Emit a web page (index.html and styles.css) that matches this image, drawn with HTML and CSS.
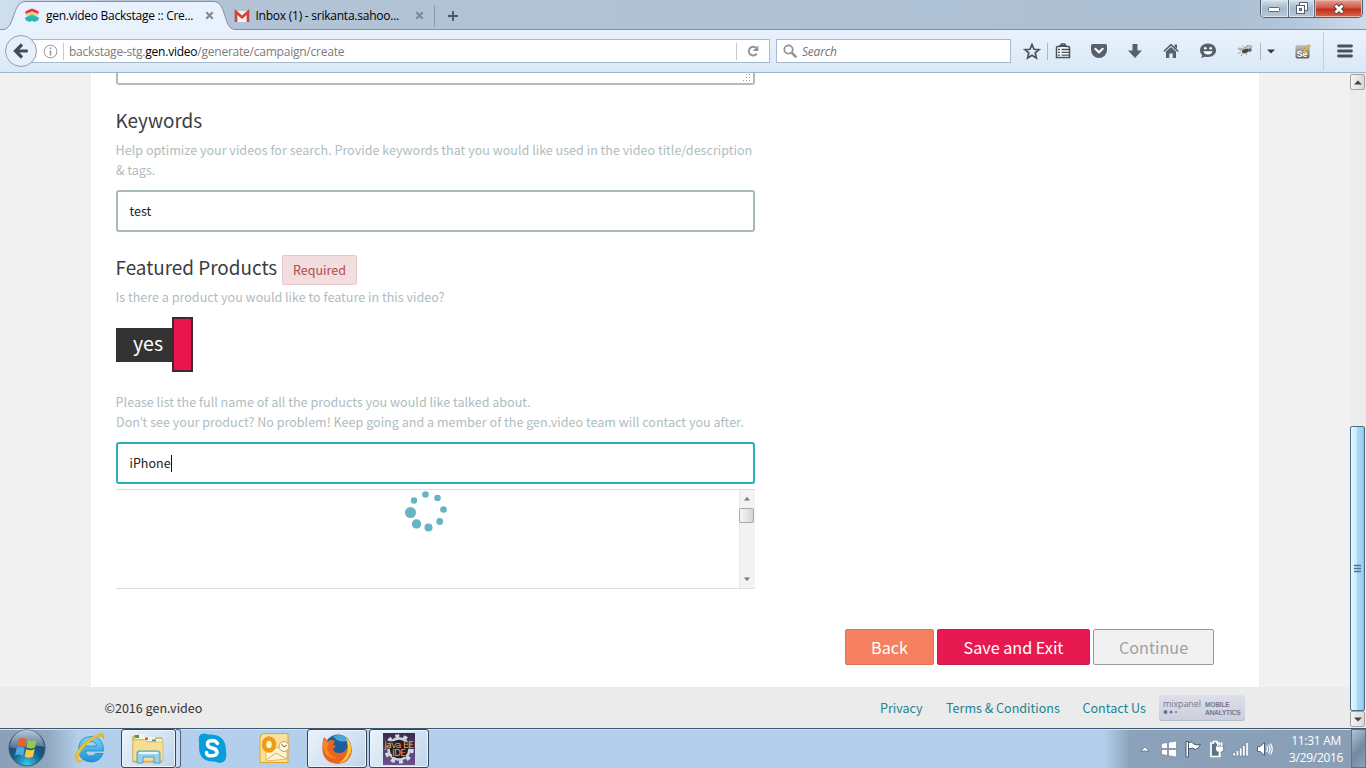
FILE: index.html
```html
<!DOCTYPE html>
<html lang="en">
<head>
<meta charset="utf-8">
<title>gen.video Backstage :: Create</title>
<link rel="stylesheet" href="styles.css">
</head>
<body>
<header class="tabs">
  <svg class="tab-shape" width="250" height="31" viewBox="0 0 250 31"><path d="M0 31V29.5H3C15 29 12 2.500 25 1.500H214C227 2.500 223 29 235 29.500H250V31Z" fill="#e9f2fc"/><path d="M0 29.500H3C15 29 12 2.500 25 1.500H214C227 2.500 223 29 235 29.500H250" fill="none" stroke="#7e91a6"/></svg>
  <div class="tab tab-active">
    <svg width="16" height="16" viewBox="0 0 16 16"><path d="M1 4 4 2 8 .5 12 2 15 4 14 6 8 3.500 2 6Z" fill="#e3354b"/><path d="M2 6 8 3.500 14 6 14 8 8 6 2 8Z" fill="#f6cf72"/><path d="M1 9.500 8 6 15 9.500 13 11 8 8.500 3 11Z" fill="#5bbd8a"/><path d="M1 10 8 8 15 10 14 12.500 10 14 8 12.500 6 14 2 12.500Z" fill="#20b6bd"/></svg>
    <span class="tab-title t1">gen.video Backstage :: Cre...</span>
    <svg class="close" width="9" height="9" viewBox="0 0 9 9"><path d="M1.300 1.300 7.700 7.700M7.700 1.300 1.300 7.700"/></svg>
  </div>
  <div class="tab tab-second">
    <svg width="16" height="16" viewBox="0 0 16 16"><path d="M1 3H15V14H1Z" fill="#eee"/><path d="M3 14V5.500L8 10 13 5.500V14" fill="#f5f3f3" stroke="#cfc8c8" stroke-width=".6"/><path d="M2 14V4L8 9.300 14 4V14" fill="none" stroke="#cf4338" stroke-width="2.600"/></svg>
    <span class="tab-title t2">Inbox (1) - srikanta.sahoo...</span>
    <svg class="close" width="9" height="9" viewBox="0 0 9 9"><path d="M1.300 1.300 7.700 7.700M7.700 1.300 1.300 7.700"/></svg>
  </div>
  <i class="tab-sep"></i>
  <svg class="plus" width="12" height="12" viewBox="0 0 12 12"><path d="M6 1V11M1 6H11" stroke="#4b5966" stroke-width="1.800"/></svg>
  <div class="window-buttons">
    <span class="min"><svg width="14" height="6"><rect x="1.500" y=".5" width="11" height="4" rx="1" fill="#fff" stroke="#5c6c7d"/></svg></span>
    <span class="max"><svg width="13" height="13"><path d="M4.500.5H12.500V8.500H4.500Z" fill="#fff" stroke="#55616e"/><rect x="1.500" y="3.500" width="8" height="8" fill="#fff" stroke="#55616e"/><rect x="4.500" y="6.500" width="2" height="2" fill="#9cb0c4" stroke="#55616e"/></svg></span>
    <span class="x"><svg width="14" height="12"><path d="M3 2 11 10M11 2 3 10" stroke="#5d3b3b" stroke-width="4.600"/><path d="M3.500 2.500 10.500 9.500M10.500 2.500 3.500 9.500" stroke="#fff" stroke-width="2.800"/></svg></span>
  </div>
</header>

<nav class="toolbar">
  <svg class="back" width="34" height="34" viewBox="0 0 34 34"><circle cx="17" cy="17" r="15.500" fill="#e7f0fa" stroke="#8d9fb4"/><path d="M23.800 17H12M18 10.500 11.500 17 18 23.500" fill="none" stroke="#414c58" stroke-width="3.200"/></svg>
  <div class="urlbar">
    <svg width="15" height="15" viewBox="0 0 15 15"><circle cx="7.500" cy="7.500" r="6.400" fill="#fff" stroke="#999"/><path d="M7.500 6.500V11.500M7.500 3.500V5.200" stroke="#999" stroke-width="1.600"/></svg>
    <i class="bar-sep"></i>
    <span class="url">backstage-stg.<b>gen.video</b>/generate/campaign/create</span>
    <i class="bar-sep"></i>
    <svg class="reload" width="14" height="14" viewBox="0 0 14 14"><path d="M10.800 9.700A4.400 4.400 0 1 1 10.300 4" fill="none" stroke="#8c969f" stroke-width="2"/><path d="M12.300 1.300V7H6.800Z" fill="#8c969f"/></svg>
  </div>
  <div class="search">
    <svg width="15" height="15" viewBox="0 0 15 15"><circle cx="5.500" cy="5.500" r="4.200" fill="none" stroke="#929292" stroke-width="1.800"/><path d="M8.700 8.700 13.300 13.300" stroke="#929292" stroke-width="2.600"/></svg>
    <span>Search</span>
  </div>
  <div class="tools">
    <svg class="tool" viewBox="0 0 24 24"><path d="M12 5.500 14 10.300 19 10.600 15.200 13.900 16.400 19 12 16.300 7.600 19 8.800 13.900 5 10.600 10 10.300Z" fill="none" stroke="#46515d" stroke-width="1.700"/></svg>
    <i class="tool-sep s1"></i>
    <svg class="tool" viewBox="0 0 24 24"><path d="M5.500 8.500Q5.500 7.500 6.500 7.500H9L10.500 5H13.500L15 7.500H17.500Q18.500 7.500 18.500 8.500V18.500H5.500Z" fill="#fff" stroke="#46515d" stroke-width="1.500"/><path d="M8.500 7H15.500" stroke="#46515d" stroke-width="2"/><path d="M7 10.500H9M10.500 10.500H18M7 13.300H9M10.500 13.300H18M7 16.100H9M10.500 16.100H18" stroke="#46515d" stroke-width="1.300"/></svg>
    <svg class="tool g" viewBox="0 0 24 24"><path d="M4 6.500Q4 5 5.500 5H18.500Q20 5 20 6.500V11A8 8 0 0 1 4 11Z" fill="#56616e"/><path d="M8.300 9.800 12 13.300 15.700 9.800" fill="none" stroke="#fff" stroke-width="2" stroke-linecap="round"/></svg>
    <svg class="tool g" viewBox="0 0 24 24"><path d="M9.500 5H14.500V11.500H19L12 19 5 11.500H9.500Z" fill="#56616e"/></svg>
    <svg class="tool g" viewBox="0 0 24 24"><path d="M4.800 12.500 12 5.700 19.200 12.500" fill="none" stroke="#56616e" stroke-width="1.700"/><path d="M15.500 5.500H18V10L15.500 7.500ZM7 12.500 12 8 17 12.500V19H13.700V14.500H10.300V19H7Z" fill="#56616e"/></svg>
    <svg class="tool g chat" viewBox="0 0 24 24"><path d="M12 4.500C17 4.500 20 7.500 20 11.300S17 18 12 18Q10.500 18 9.300 17.700L4.800 19Q6.500 17.500 6 16A6 6 0 0 1 4 11.300C4 7.500 7 4.500 12 4.500Z" fill="#56616e"/><circle cx="9.300" cy="9.200" r="1.300" fill="#fff"/><circle cx="14.700" cy="9.200" r="1.300" fill="#fff"/><path d="M7.500 12.300H16.500Q15.500 15.500 12 15.500T7.500 12.300Z" fill="#fff"/></svg>
    <svg class="tool g chat" viewBox="0 0 24 24"><path d="M8 13 5 14.500M10 14 8 17M13 13 13.500 16M16 11 18 13M12 9 9.500 7M14 8 14.500 6" stroke="#888" stroke-width=".8" fill="none"/><ellipse cx="9" cy="10.500" rx="4.500" ry="1.600" fill="#b4b4b4" transform="rotate(15 9 10.500)"/><ellipse cx="15.500" cy="8.500" rx="3.500" ry="1.700" fill="#c8c8c8" stroke="#888" stroke-width=".6" transform="rotate(-15 15.500 8.500)"/><ellipse cx="12.500" cy="12" rx="3.600" ry="2" fill="#484848" transform="rotate(-15 12.500 12)"/><circle cx="17" cy="11" r="1.800" fill="#666"/></svg>
    <i class="tool-sep s2"></i>
    <svg class="caret" viewBox="0 0 20 24" width="20" height="24"><path d="M6 10.500H14L10 14.500Z" fill="#303a44"/></svg>
    <svg class="tool sc" viewBox="0 0 24 24"><defs><linearGradient id="se" x2="0" y2="1"><stop stop-color="#c5c5c2"/><stop offset="1" stop-color="#5c5c5a"/></linearGradient></defs><rect x="4.500" y="6" width="14" height="13.500" rx="2" fill="url(#se)"/><text x="5.500" y="17.700" class="se-text">Se</text><path d="M12 12.500 17.500 5.500 19.500 7 13.800 13.500 11.500 14Z" fill="#e4bd4a" stroke="#9e8540" stroke-width=".5"/></svg>
    <i class="tool-sep s3"></i>
    <svg class="tool menu" viewBox="0 0 24 24"><path d="M5.500 7H18.500M5.500 12H18.500M5.500 17H18.500" stroke="#46515d" stroke-width="2.800" stroke-linecap="round"/></svg>
  </div>
</nav>

<div class="viewport">
  <div class="page">
    <main class="panel">
      <div class="form">
        <div class="textarea-end"><svg width="9" height="9" viewBox="0 0 9 9"><path d="M7 0h1v1h-1zM4 3h1v1h-1zM7 3h1v1h-1zM1 6h1v1h-1zM4 6h1v1h-1zM7 6h1v1h-1z" fill="#999"/></svg></div>
        <h2 class="keywords">Keywords</h2>
        <p class="help">Help optimize your videos for search. Provide keywords that you would like used in the video title/description<br>&amp; tags.</p>
        <div class="input">test</div>
        <div class="feature-row"><h2>Featured Products</h2><span class="required">Required</span></div>
        <p class="help">Is there a product you would like to feature in this video?</p>
        <div class="toggle"><span class="yes">yes</span><span class="handle"></span></div>
        <p class="help">Please list the full name of all the products you would like talked about.<br>Don<span class="apos">’</span>t see your product? No problem! Keep going and a member of the gen.video team will contact you after.</p>
        <div class="input focus">iPhone<i class="cursor"></i></div>
        <div class="results">
          <svg class="spinner" width="44" height="44" viewBox="0 0 44 44" fill="#67b4c3"><circle cx="21.500" cy="5.500" r="3.300"/><circle cx="33.500" cy="9" r="3.300"/><circle cx="39.500" cy="20.500" r="3.300"/><circle cx="35.700" cy="32.500" r="3.400"/><circle cx="24.500" cy="38.500" r="4"/><circle cx="12.500" cy="35" r="4.700"/><circle cx="6.500" cy="23.500" r="5.500"/><circle cx="10" cy="11.500" r="3.200"/></svg>
          <div class="mini-scroll"><svg width="8" height="5"><path d="M1 4.500H7L4 1Z" fill="#777"/></svg><i class="mini-thumb"></i><svg width="8" height="5"><path d="M1 .5H7L4 4Z" fill="#777"/></svg></div>
        </div>
      </div>
      <div class="actions"><span class="btn btn-back">Back</span><span class="btn btn-save">Save and Exit</span><span class="btn btn-cont">Continue</span></div>
    </main>
    <footer class="footer">
      <span class="copy">©2016 gen.video</span>
      <div class="links"><a class="l1">Privacy</a><a class="l2">Terms &amp; Conditions</a><a class="l3">Contact Us</a></div>
      <div class="mixpanel"><div class="mp-logo"><span>mixpanel</span><svg width="16" height="6"><g fill="#6f6f8c"><circle cx="2.500" cy="3" r="2"/><circle cx="8" cy="3" r="1.500"/><circle cx="13" cy="3" r="1"/></g></svg></div><div class="mp-text">MOBILE<br>ANALYTICS</div></div>
    </footer>
  </div>
  <div class="scrollbar">
    <span class="sb-btn"><svg width="8" height="5"><path d="M0 4.500H8L4 .5Z" fill="#444"/></svg></span>
    <span class="thumb"><svg width="8" height="9"><path d="M0 1.500H7M0 4.500H7M0 7.500H7" stroke="#3d7898" stroke-width="1.500"/></svg></span>
    <span class="sb-btn"><svg width="8" height="5"><path d="M0 .5H8L4 4.500Z" fill="#444"/></svg></span>
  </div>
</div>

<div class="taskbar">
  <svg class="start" width="38" height="38" viewBox="0 0 38 38"><defs><radialGradient id="orb" cx=".5" cy=".95" r=".8"><stop stop-color="#39c8ee"/><stop offset=".5" stop-color="#15618f"/><stop offset="1" stop-color="#1c405f"/></radialGradient><linearGradient id="orbtop" x2="0" y2="1"><stop stop-color="#b8c9d8"/><stop offset="1" stop-color="#54718f"/></linearGradient></defs><circle cx="19" cy="19" r="18" fill="url(#orb)" stroke="#3f5a77"/><path d="M2 18A17 17 0 0 1 36 18Q28 15 19 18T2 18Z" fill="url(#orbtop)"/><path d="M11 10Q15 8 18.500 10.500L17 18Q13 15.500 9 17.500Z" fill="#e8622c"/><path d="M20 11Q24 13 28.500 11L27 18.500Q23 20.500 18.700 18.500Z" fill="#9ac644"/><path d="M8.700 19Q13 17 16.800 19.500L15 27Q11 24.500 7 26.500Z" fill="#4fa9e3"/><path d="M18.300 20Q22 22.500 26.700 20L25 27.500Q21 30 16.600 27.500Z" fill="#fbc93d"/></svg>
  <svg class="ie" width="34" height="34" viewBox="0 0 34 34"><defs><linearGradient id="ieg" x2="0" y2="1"><stop stop-color="#77d7f8"/><stop offset="1" stop-color="#1b8fd4"/></linearGradient></defs><path d="M30.500 20H12.500Q13 25 18 25 21.500 25 22.500 22.500H30Q27 31 18 31 5.500 30 5.500 18 6 6 18 5.500 31 6 30.500 20ZM12.500 15H23.500Q23 10.500 18 10.500T12.500 15Z" fill="url(#ieg)" stroke="#2488c2" stroke-width=".8"/><path d="M25 5.500Q31 1.500 30.500 6.500 29.500 2.500 21 7.500 9 15 5 26 3.500 31.500 10 29 3 34.500 2 27 3 19 13 10.500 19 5.500 26 3Q33 1 30.500 8 31 4 25 5.500Z" fill="#f5c42e" stroke="#e0aa20" stroke-width=".7"/></svg>
  <div class="task explorer"><svg width="34" height="32" viewBox="0 0 34 32"><path d="M2 3H13L15 5H31V29H2Z" fill="#e9cb70" stroke="#c2a048"/><path d="M4 1.500H14V6H4ZM13 4H24V8H13ZM21 6H31V10H21Z" fill="#f6f4df"/><path d="M4 2H8V5H4Z" fill="#35a149"/><path d="M14 4.500H17V7H14Z" fill="#dd5743"/><path d="M21 6.500H25V8.500H21Z" fill="#3e91cf"/><path d="M2 7H14L16 9H32V28H2Z" fill="#f6df94" stroke="#d5b861" stroke-width=".8"/><path d="M6 30V20Q6 18 8 18H27Q29 18 29 20V30H23V24H12V30Z" fill="#9bd0e9" stroke="#4b9fc8"/><path d="M8 20H27" stroke="#e7f8ff" stroke-width="2"/></svg></div>
  <i class="stack"></i>
  <svg class="skype" width="32" height="32" viewBox="0 0 32 32"><path d="M3 10Q1 2 8 1.500L13 2.500Q30 2 30 19 32 30 24 31L18 29.500Q3 30 3 15Z" fill="#079edb"/><path d="M21.500 11.500Q20 8.500 16 8.500 11.500 8.700 11.500 12T16 16 21 20 16 23.800 10.500 20.500" fill="none" stroke="#fff" stroke-width="3.500" stroke-linecap="round"/></svg>
  <svg class="outlook" width="32" height="32" viewBox="0 0 32 32"><path d="M5 1.500H30V30.500H2V5Z" fill="#fbe09a" stroke="#e1a52d"/><path d="M8 18 29 14V27L8 29Z" fill="#fff6d7" stroke="#d8a848" stroke-width=".7"/><path d="M8 28 18 21 29 27" fill="none" stroke="#e2b248"/><ellipse cx="11" cy="12.500" rx="5" ry="6" fill="#fff2c9" stroke="#ed9c19" stroke-width="4.500"/><circle cx="26" cy="14.500" r="5" fill="#fff9e6" stroke="#d8a139"/><path d="M23.500 12 26 15 29 13" fill="none" stroke="#7d6337"/></svg>
  <div class="task firefox"><svg width="32" height="32" viewBox="0 0 32 32"><circle cx="17" cy="14.500" r="13" fill="#1d5f9e"/><path d="M12 3Q22 0 28 7 22 10 16 7Z" fill="#45a9d8"/><path d="M3 4 7 8Q11 6 14 8L12 12 15 13 12 16Q13 20 18 20 24 20 26 15 28 10 25 5 31 9 31 18 29 30 17 31 3 30 1.500 18 1 9 3 4Z" fill="#e9641f"/><path d="M25 4Q34 14 28 23 25 29 18 30 27 24 27 14Z" fill="#f9c83e"/><path d="M3 5Q4 9 8 10L6 16Q8 23 16 25 8 26 4 20 1 13 3 5Z" fill="#f58b25"/></svg></div>
  <div class="task java"><svg width="32" height="32" viewBox="0 0 32 32"><defs><linearGradient id="jg" x2="0" y2="1"><stop stop-color="#382b4c"/><stop offset="1" stop-color="#6b5190"/></linearGradient></defs><rect width="32" height="32" fill="url(#jg)"/><circle cx="16" cy="16" r="13" fill="none" stroke="#d8d9dd" stroke-width="3.500" stroke-dasharray="4 4.170"/><circle cx="16" cy="16" r="10.500" fill="#211f27" stroke="#cfd0d6" stroke-width="2.600"/><path d="M1 8H31V16H23V24H9V16H1Z" fill="#211f27" opacity=".75"/></svg><div class="java-text"><span>Java EE</span><span>IDE</span></div></div>
  <div class="tray">
    <svg class="up" width="10" height="6"><path d="M.8 5H9.200L5 1Z" fill="#fff" stroke="#586b80" stroke-width=".7"/></svg>
    <svg width="18" height="18" viewBox="0 0 18 18"><path d="M1.500 3.500 7.500 2.500V8.500H1.500ZM8.500 2.300 16.500 1V8.500H8.500ZM1.500 9.500H7.500V15.500L1.500 14.500ZM8.500 9.500H16.500V17L8.500 15.700Z" fill="#fff" stroke="#586b80" stroke-width=".5"/></svg>
    <svg width="18" height="18" viewBox="0 0 18 18"><path d="M2 1.500H4.500V17H2ZM4.500 2.500Q8 1 10 4 13 6 16.500 4 15 9 11.500 9.500 9 7 4.500 9Z" fill="#fff" stroke="#43576c"/></svg>
    <svg width="18" height="18" viewBox="0 0 18 18"><path d="M3 3H5.500V1.500H9V3H11.500V16.500H3Z" fill="#5e7287" stroke="#fff" stroke-width="1.700"/><path d="M7.500 6H15.700V9.500Q15.500 12.500 11.700 12.500 8 12.500 7.500 9.500Z" fill="#fff" stroke="#4f6378" stroke-width=".8"/><path d="M9.800 2.500V6M13.700 2.500V6M11.700 12V17" stroke="#fff" stroke-width="1.500"/></svg>
    <svg width="18" height="18" viewBox="0 0 18 18"><path d="M1 12.500V16H3.500V12.500ZM4.200 10.500V16H6.700V10.500ZM7.400 8V16H9.900V8ZM10.600 5.500V16H13.100V5.500ZM13.800 2.500V16H16.300V2.500Z" fill="#fff" stroke="#596d82" stroke-width=".5"/></svg>
    <svg width="18" height="18" viewBox="0 0 18 18"><path d="M1.500 6.500H4L8.500 2.500V15.500L4 11.500H1.500Z" fill="#fff" stroke="#4f6378"/><path d="M10.500 6Q12.500 9 10.500 12M12.500 4.500Q15.500 9 12.500 13.500M14.500 3.500Q18 9 14.500 14.500" fill="none" stroke="#fff" stroke-width="1.200"/></svg>
  </div>
  <div class="clock"><span>11:31 AM</span><span class="date">3/29/2016</span></div>
  <i class="show-desktop"></i>
</div>
</body>
</html>
```
FILE: styles.css
```css
* { box-sizing: border-box; }
html, body { margin: 0; overflow: hidden; }
body { width: 1366px; height: 768px; display: flex; flex-direction: column; font-family: "Noto Sans CJK SC", sans-serif; background: #f1f1f1; }
svg { display: block; flex: none; }
i { flex: none; }

.tabs { position: relative; height: 30px; flex: none; display: flex; background: linear-gradient(90deg, #cfdfee 0, #b3c4d6 130px, #adbfd2 1230px, #b5c8db 1300px, #cbdcec 1366px); border-bottom: 1px solid #7e91a6; font: 12px "Open Sans", sans-serif; color: #000; }
.tab-shape { position: absolute; left: 0; top: 0; }
.tab { position: relative; display: flex; align-items: center; height: 31px; }
.tab-active { padding-left: 24px; width: 227px; }
.tab-second { padding-left: 7px; width: 207px; }
.tab-title { margin-left: 6px; white-space: nowrap; width: 159px; line-height: 18px; }
.t1 { letter-spacing: -.26px; }
.t2 { letter-spacing: -.24px; margin-left: 5.500px; }
.close { stroke: #7c8b98; stroke-width: 2.2; }
.tab-sep { width: 1px; height: 22px; margin: 5px 12px 0 0; background: #8798a9; }
.plus { margin-top: 10px; }
.window-buttons { display: flex; flex: none; margin-left: 801px; width: 103px; height: 18px; border: 1px solid #505e6d; border-top: 0; border-radius: 0 0 5px 5px; overflow: hidden; }
.window-buttons span { display: flex; align-items: center; justify-content: center; background: linear-gradient(#d4e0ec, #a6b8cb 50%, #b7c9da); box-shadow: inset 0 0 0 1px #dce6f0; border-right: 1px solid #5c6b7a; }
.window-buttons .min { width: 28px; padding-top: 3px; }
.window-buttons .max { width: 27px; }
.window-buttons .x { width: 47px; border: 0; background: linear-gradient(#e3a195, #cf5a48 45%, #c02f1c 55%, #da6a4d); box-shadow: inset 0 0 0 1px #eab7a9; }

.toolbar { height: 43px; flex: none; display: flex; background: linear-gradient(#e9f2fc, #dae8f6); border-bottom: 1px solid #a4b5c9; position: relative; }
.back { margin: 4px 0 0 4px; position: relative; z-index: 1; }
.urlbar { margin: 9px 0 0 -8px; width: 740px; height: 24px; border: 1px solid #a9bace; background: #fff; display: flex; align-items: center; padding-left: 12px; }
.bar-sep { width: 1px; height: 17px; background: #c9c9c9; }
.urlbar .bar-sep { margin-left: 5px; }
.url { margin-left: 5px; padding-top: 2px; width: 662px; font: 12px/18px "Open Sans", sans-serif; letter-spacing: -.23px; color: #7b7b7b; white-space: nowrap; }
.url b { font-weight: 400; color: #000; }
.reload { margin-left: 9px; }
.search { margin: 9px 0 0 6px; width: 235px; height: 24px; background: #fff; border: 1px solid #a9bace; display: flex; align-items: center; padding-left: 6px; gap: 4px; font: italic 12px/18px "Open Sans", sans-serif; letter-spacing: -.2px; color: #747474; }
.search span { padding-top: 2px; }
.tools { display: flex; align-items: center; margin-left: 9px; height: 42px; }
.tool { width: 24px; height: 24px; }
.g { margin-left: 12px; }
.chat { margin-left: 13px; }
.tool-sep { width: 1px; height: 17px; background: #a9b7c6; margin: 0 3px; }
.s2 { margin: 0 0 0 3px; }
.sc { margin-left: 10px; }
.s3 { height: 38px; margin: 0 9px 0 8px; background: #c0cfdf; }
.se-text { font: 700 9px "Liberation Sans", sans-serif; fill: #fff; }

.viewport { height: 655px; flex: none; display: flex; }
.page { width: 1350px; }
.panel { width: 1168px; height: 614px; margin-left: 91px; background: #fff; padding-left: 25px; display: flex; flex-direction: column; }
.form { width: 639px; height: 516px; flex: none; display: flex; flex-direction: column; }
.form > * { flex: none; }
.textarea-end { height: 12px; border: 2px solid #afbdbd; border-top: 0; border-radius: 0 0 3px 3px; display: flex; justify-content: flex-end; align-items: flex-end; padding: 0 2px 0 0; }
h2 { margin: 0; font-size: 18.900px; font-weight: 400; line-height: 32px; color: #3a3e40; white-space: nowrap; text-indent: -.5px; }
.keywords { margin-top: 19px; height: 36px; }
.help { margin: 0; font-size: 12.570px; line-height: 20px; color: #afbdbe; white-space: nowrap; text-indent: -.4px; }
.apos { font-family: Lato, sans-serif; line-height: 1; }
.input { margin-top: 10px; height: 42px; border: 2px solid #a9b9b8; border-radius: 3px; padding-left: 11.500px; font-size: 12.500px; line-height: 38px; color: #222; display: flex; align-items: center; }
.focus { border-color: #26b0ba; }
.cursor { width: 1px; height: 17px; background: #111; }
.feature-row { display: flex; margin-top: 19px; height: 36px; }
.feature-row h2 { width: 166px; }
.required { margin-top: 4px; width: 75px; height: 30px; border: 1px solid #e6c9cc; border-radius: 2px; background: #f2dedf; color: #b14a4b; font-size: 12.500px; line-height: 27px; text-align: center; }
.toggle { display: flex; align-items: center; height: 55px; margin: 10px 0 20px; }
.yes { width: 56px; height: 34px; background: #333; color: #fff; font-size: 19.500px; line-height: 30px; padding-left: 17px; }
.handle { width: 21px; height: 55px; background: #e8154f; border: 2px solid #452630; }
.results { margin-top: 5px; height: 100px; border-top: 1px solid #ddd; border-bottom: 1px solid #ddd; display: flex; }
.spinner { margin: -1px 291px 0 288px; }
.mini-scroll { width: 16px; height: 98px; background: #f3f3f3; box-shadow: inset 1px 0 #e8e8e8; display: flex; flex-direction: column; align-items: center; padding: 6px 1px 6px 0; }
.mini-thumb { width: 15px; height: 15px; margin: 7px 0 auto; border: 1px solid #aaa; border-radius: 2px; background: linear-gradient(90deg, #f7f7f7, #d4d4d4); }
.actions { display: flex; gap: 3px; margin: 40px 0 0 729px; }
.btn { height: 36px; border: 1px solid; border-radius: 2px; text-align: center; font-size: 16.200px; line-height: 34px; color: #fff; }
.btn-back { width: 89px; background: #f58060; border-color: #de7357; }
.btn-save { width: 153px; background: #e61a50; border-color: #bd2148; }
.btn-cont { width: 121px; background: #f1f1f1; border-color: #999; color: #a0a0a0; }
.footer { height: 41px; background: #ebebeb; display: flex; align-items: center; padding-left: 104.500px; font-size: 12.550px; line-height: 20px; color: #333; white-space: nowrap; }
.copy { width: 775.500px; }
.links { display: flex; width: 279px; color: #1b8390; }
.l1 { width: 66px; } .l2 { width: 136.500px; }
.mixpanel { width: 86px; height: 26px; border-radius: 3px; background: linear-gradient(#dde0e8, #cbcfdd); box-shadow: inset 0 -1px #b7bccb; display: flex; padding: 4px; gap: 3px; font-family: "Liberation Sans", sans-serif; color: #77778f; }
.mp-logo { width: 39px; font: 9px/10px "Open Sans", sans-serif; letter-spacing: -.1px; }
.mp-text { font-size: 6.600px; font-weight: 700; line-height: 8px; padding-top: 2px; letter-spacing: -.2px; }
.scrollbar { width: 16px; height: 655px; background: #ececec; display: flex; flex-direction: column; align-items: flex-start; padding-top: 1px; }
.sb-btn { width: 15px; height: 16px; flex: none; border: 1px solid #a2a2a2; border-radius: 2px; background: linear-gradient(90deg, #f4f4f4, #d9d9d9); display: flex; align-items: center; justify-content: center; }
.thumb { width: 15px; height: 285px; margin-top: 336px; border: 1px solid #486e8c; border-radius: 2px; background: linear-gradient(90deg, #e8f7fe, #c8eafc 45%, #a5d7f3 50%, #a2d2ee 85%, #8bbcdb); display: flex; align-items: center; justify-content: center; }

.taskbar { height: 40px; flex: none; border-top: 1px solid #3c5870; box-shadow: inset 0 1px #d4e4f4; background: linear-gradient(90deg, #8ba0b8 0, #91a7bf 48px, #b3cfeb 78px, #b3cfeb 1104px, #8ca2ba 1130px, #889eb6 1366px); display: flex; }
.start { margin-left: 8px; }
.ie { margin: 2px 0 0 27px; }
.task { height: 39px; border: 1px solid #34465a; border-radius: 3px; background: linear-gradient(135deg, #eaf2fb, #c0d5eb); box-shadow: inset 0 0 0 1px #eef5fc; display: flex; align-items: center; justify-content: center; }
.explorer { margin-left: 14px; width: 55px; }
.stack { width: 5px; height: 39px; border: 1px solid #52677e; border-left: 0; border-radius: 0 3px 3px 0; background: #c7dbef; }
.skype { margin: 3px 0 0 15px; }
.outlook { margin: 3px 0 0 30px; }
.firefox { margin-left: 17px; width: 60px; }
.java { position: relative; margin-left: 2px; width: 60px; }
.java-text { position: absolute; left: 9px; top: 11px; width: 40px; display: flex; flex-direction: column; align-items: center; font: 9px/8px "DejaVu Sans", sans-serif; color: #ff9a38; letter-spacing: -.6px; white-space: nowrap; }
.tray { margin-left: 711px; display: flex; align-items: center; gap: 6px; width: 146px; }
.up { margin-right: 4px; }
.clock { width: 66px; display: flex; flex-direction: column; align-items: center; color: #fff; font: 12px/17px "Open Sans", sans-serif; letter-spacing: -.3px; padding: 3px 4px 0 0; white-space: nowrap; }
.show-desktop { width: 15px; border: 1px solid #5d7188; background: linear-gradient(135deg, #b2c3d5, #71889f 55%, #8fa4ba); }
```
